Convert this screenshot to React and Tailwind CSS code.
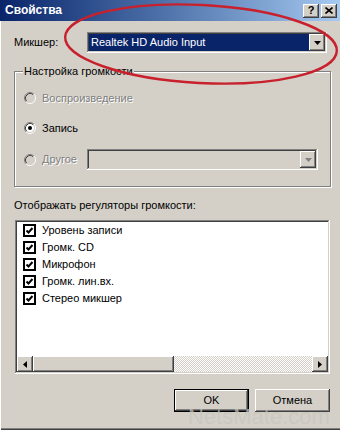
import React from 'react';

const raised =
  'shadow-[inset_-1px_-1px_0_#404040,inset_1px_1px_0_#fff,inset_-2px_-2px_0_#808080,inset_2px_2px_0_#d4d0c8]';
const sunken =
  'shadow-[inset_-1px_-1px_0_#fff,inset_1px_1px_0_#808080,inset_-2px_-2px_0_#d4d0c8,inset_2px_2px_0_#404040]';

const Radio = ({ checked, disabled }) => (
  <svg width="12" height="12" viewBox="0 0 12 12" className="shrink-0">
    <circle cx="6" cy="6" r="4.5" fill={disabled ? '#d4d0c8' : '#fff'} />
    <path d="M2.11 9.89A5.5 5.5 0 0 1 9.89 2.11" fill="none" stroke="#808080" />
    <path d="M9.89 2.11A5.5 5.5 0 0 1 2.11 9.89" fill="none" stroke="#fff" />
    <path d="M2.82 9.18A4.5 4.5 0 0 1 9.18 2.82" fill="none" stroke="#404040" />
    <path d="M9.18 2.82A4.5 4.5 0 0 1 2.82 9.18" fill="none" stroke="#d4d0c8" />
    {checked && <circle cx="6" cy="6" r="2" fill="#000" />}
  </svg>
);

const Check = () => (
  <svg width="13" height="13" viewBox="0 0 13 13" className="shrink-0">
    <rect x="1" y="1" width="11" height="11" fill="#fff" stroke="#000" strokeWidth="2" />
    <path d="M3.5 6.5L5.5 8.5L9.5 4" fill="none" stroke="#000" strokeWidth="2" />
  </svg>
);

const DropBtn = ({ disabled }) => (
  <div className={`flex h-[17px] w-[16px] shrink-0 items-center justify-center bg-[#d4d0c8] ${raised}`}>
    <svg width="7" height="4" viewBox="0 0 7 4">
      <polygon points="0,0 7,0 3.5,4" fill={disabled ? '#808080' : '#000'} />
    </svg>
  </div>
);

const items = ['Уровень записи', 'Громк. CD', 'Микрофон', 'Громк. лин.вх.', 'Стерео микшер'];

export default function App() {
  return (
    <div className="relative h-[430px] w-[340px] overflow-hidden bg-[#d4d0c8] font-['Liberation_Sans',Arial,sans-serif] text-[11px] leading-[13px] text-black shadow-[inset_1px_0_0_#fff,inset_0_-1px_0_#404040,inset_0_-2px_0_#808080]">
      {/* title bar */}
      <div className="flex h-[21px] items-center justify-between bg-linear-to-r from-[#0a246a] to-[#a6caf0] pl-[5px] pr-[3px]">
        <span className="text-[12px] font-bold text-white">Свойства</span>
        <div className="flex gap-[2px]">
          <div className={`flex h-[14px] w-[16px] items-center justify-center bg-[#d4d0c8] text-[11px] font-bold ${raised}`}>?</div>
          <div className={`flex h-[14px] w-[16px] items-center justify-center bg-[#d4d0c8] ${raised}`}>
            <svg width="8" height="7" viewBox="0 0 8 7">
              <path d="M0.5 0.5L7.5 6.5M7.5 0.5L0.5 6.5" stroke="#000" strokeWidth="1.6" />
            </svg>
          </div>
        </div>
      </div>

      <div className="pl-[14px]">
        {/* mixer */}
        <div className="mt-[11px] flex h-[21px] items-center">
          <span className="w-[73px]">Микшер:</span>
          <div className={`flex h-[21px] w-[240px] items-center bg-[#0a246a] p-[2px] ${sunken}`}>
            <span className="flex-1 pl-[2px] text-white">Realtek HD Audio Input</span>
            <DropBtn />
          </div>
        </div>

        {/* volume group */}
        <div className="relative mt-[18px] w-[317px] border border-[#808080] shadow-[inset_1px_1px_0_#fff,1px_1px_0_#fff]">
          <span className="absolute left-[8px] top-[-7px] bg-[#d4d0c8] px-[1px]">Настройка громкости</span>
          <div className="flex flex-col pb-[16px] pl-[9px] pt-[18px]">
            <div className="flex h-[16px] items-center gap-[6px] text-[#808080] [text-shadow:1px_1px_0_#fff]">
              <Radio disabled />
              <span>Воспроизведение</span>
            </div>
            <div className="mt-[14px] flex h-[16px] items-center gap-[6px]">
              <Radio checked />
              <span>Запись</span>
            </div>
            <div className="mt-[13px] flex h-[21px] items-center gap-[6px]">
              <Radio disabled />
              <span className="w-[39px] text-[#808080] [text-shadow:1px_1px_0_#fff]">Другое</span>
              <div className={`flex h-[21px] w-[231px] items-center justify-end bg-[#d4d0c8] p-[2px] ${sunken}`}>
                <DropBtn disabled />
              </div>
            </div>
          </div>
        </div>

        <div className="mt-[12px]">Отображать регуляторы громкости:</div>

        {/* list */}
        <div className={`ml-[1px] mt-[8px] flex h-[154px] w-[315px] flex-col bg-white p-[2px] ${sunken}`}>
          <div className="flex-1">
            {items.map((t) => (
              <div key={t} className="flex h-[17px] items-center gap-[6px] pl-[6px]">
                <Check />
                <span>{t}</span>
              </div>
            ))}
          </div>
          <div className="flex h-[16px]">
            <div className={`flex w-[16px] items-center justify-center bg-[#d4d0c8] ${raised}`}>
              <svg width="4" height="7" viewBox="0 0 4 7">
                <polygon points="4,0 4,7 0,3.5" fill="#000" />
              </svg>
            </div>
            <div className={`w-[141px] bg-[#d4d0c8] ${raised}`} />
            <div className="flex-1 bg-[length:2px_2px] bg-[image:repeating-conic-gradient(#d4d0c8_0_25%,#fff_0_50%)]" />
            <div className={`flex w-[16px] items-center justify-center bg-[#d4d0c8] ${raised}`}>
              <svg width="4" height="7" viewBox="0 0 4 7">
                <polygon points="0,0 0,7 4,3.5" fill="#000" />
              </svg>
            </div>
          </div>
        </div>

        {/* buttons */}
        <div className="ml-[160px] mt-[15px] flex gap-[6px]">
          <div className="h-[23px] w-[75px] border border-black">
            <div className={`flex h-full items-center justify-center bg-[#d4d0c8] ${raised}`}>OK</div>
          </div>
          <div className={`flex h-[23px] w-[75px] items-center justify-center bg-[#d4d0c8] ${raised}`}>Отмена</div>
        </div>
      </div>

      {/* watermark */}
      <span className="pointer-events-none absolute left-[188px] top-[406px] text-[22px] leading-[22px] text-[#c8c6bf] opacity-70">
        NetsMate.com
      </span>

      {/* red annotation */}
      <svg className="pointer-events-none absolute inset-0" width="340" height="430">
        <ellipse cx="201" cy="44" rx="136" ry="39" transform="rotate(3 201 44)" fill="none" stroke="#c8202c" strokeWidth="2.4" />
      </svg>
    </div>
  );
}
